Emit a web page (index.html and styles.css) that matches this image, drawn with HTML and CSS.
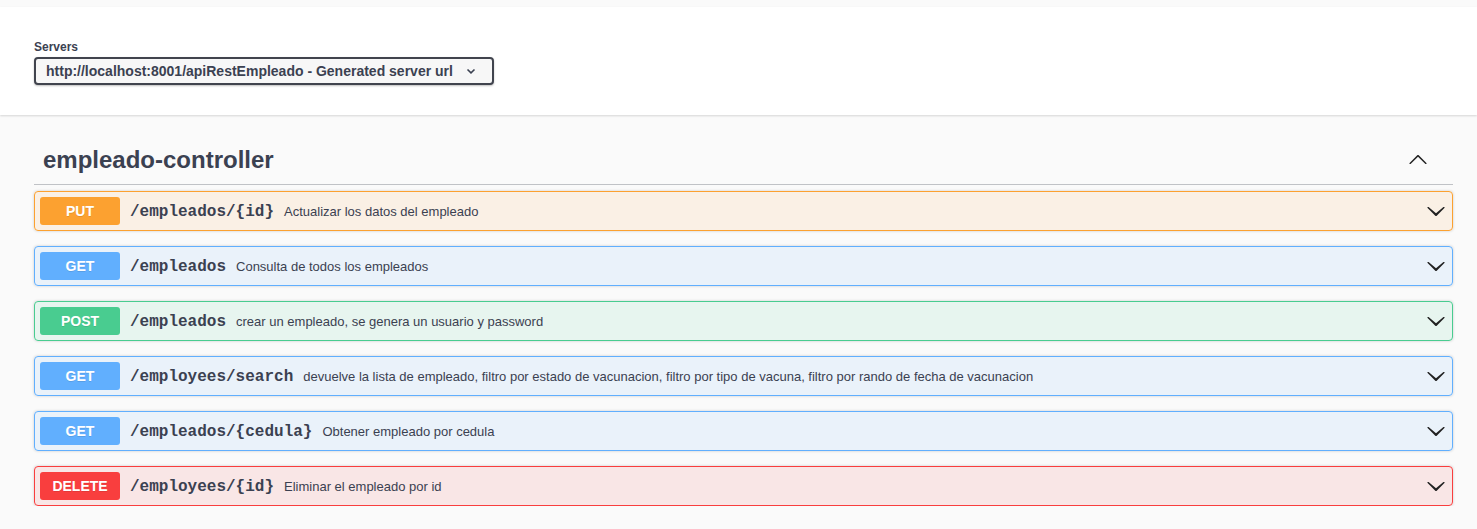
FILE: index.html
```html
<!DOCTYPE html>
<html lang="es">
<head>
<meta charset="utf-8">
<title>Swagger UI</title>
<link rel="stylesheet" href="styles.css">
</head>
<body>
<div class="top-strip"></div>
<section class="scheme-container">
  <div class="wrapper">
    <div class="servers">
      <span class="servers-title">Servers</span>
      <div class="select">
        <span>http://localhost:8001/apiRestEmpleado - Generated server url</span>
        <svg class="select-arrow" width="10" height="10" viewBox="0 0 10 10"><path d="M1.5 3.5 L5 6.8 L8.5 3.5" fill="none" stroke="#3b4151" stroke-width="1.6"/></svg>
      </div>
    </div>
  </div>
</section>
<div class="wrapper">
  <div class="tag-section">
    <h3 class="opblock-tag">
      <span>empleado-controller</span>
      <svg class="tag-arrow" width="20" height="20" viewBox="0 0 20 20"><path d="M17.418 14.891c.272.268.709.268.979 0s.271-.701 0-.969l-7.908-7.83c-.27-.268-.707-.268-.979 0l-7.908 7.83c-.27.268-.27.701 0 .969.271.268.709.268.979 0L10 7.75l7.418 7.141z" fill="#222"/></svg>
    </h3>
    <div class="ops">
      <div class="opblock put">
        <span class="method">PUT</span>
        <span class="path">/empleados/{id}</span>
        <span class="desc">Actualizar los datos del empleado</span>
        <svg class="arrow" width="20" height="20" viewBox="0 0 20 20"><path d="M17.418 6.109c.272-.268.709-.268.979 0s.271.701 0 .969l-7.908 7.83c-.27.268-.707.268-.979 0l-7.908-7.830c-.27-.268-.27-.701 0-.969.271-.268.709-.268.979 0L10 12.25l7.418-6.141z" fill="#222"/></svg>
      </div>
      <div class="opblock get">
        <span class="method">GET</span>
        <span class="path">/empleados</span>
        <span class="desc">Consulta de todos los empleados</span>
        <svg class="arrow" width="20" height="20" viewBox="0 0 20 20"><path d="M17.418 6.109c.272-.268.709-.268.979 0s.271.701 0 .969l-7.908 7.83c-.27.268-.707.268-.979 0l-7.908-7.83c-.27-.268-.27-.701 0-.969.271-.268.709-.268.979 0L10 12.25l7.418-6.141z" fill="#222"/></svg>
      </div>
      <div class="opblock post">
        <span class="method">POST</span>
        <span class="path">/empleados</span>
        <span class="desc">crear un empleado, se genera un usuario y password</span>
        <svg class="arrow" width="20" height="20" viewBox="0 0 20 20"><path d="M17.418 6.109c.272-.268.709-.268.979 0s.271.701 0 .969l-7.908 7.83c-.27.268-.707.268-.979 0l-7.908-7.83c-.27-.268-.27-.701 0-.969.271-.268.709-.268.979 0L10 12.25l7.418-6.141z" fill="#222"/></svg>
      </div>
      <div class="opblock get">
        <span class="method">GET</span>
        <span class="path">/employees/search</span>
        <span class="desc">devuelve la lista de empleado, filtro por estado de vacunacion, filtro por tipo de vacuna, filtro por rando de fecha de vacunacion</span>
        <svg class="arrow" width="20" height="20" viewBox="0 0 20 20"><path d="M17.418 6.109c.272-.268.709-.268.979 0s.271.701 0 .969l-7.908 7.83c-.27.268-.707.268-.979 0l-7.908-7.83c-.27-.268-.27-.701 0-.969.271-.268.709-.268.979 0L10 12.25l7.418-6.141z" fill="#222"/></svg>
      </div>
      <div class="opblock get">
        <span class="method">GET</span>
        <span class="path">/empleados/{cedula}</span>
        <span class="desc">Obtener empleado por cedula</span>
        <svg class="arrow" width="20" height="20" viewBox="0 0 20 20"><path d="M17.418 6.109c.272-.268.709-.268.979 0s.271.701 0 .969l-7.908 7.83c-.27.268-.707.268-.979 0l-7.908-7.83c-.27-.268-.27-.701 0-.969.271-.268.709-.268.979 0L10 12.25l7.418-6.141z" fill="#222"/></svg>
      </div>
      <div class="opblock delete">
        <span class="method">DELETE</span>
        <span class="path">/employees/{id}</span>
        <span class="desc">Eliminar el empleado por id</span>
        <svg class="arrow" width="20" height="20" viewBox="0 0 20 20"><path d="M17.418 6.109c.272-.268.709-.268.979 0s.271.701 0 .969l-7.908 7.83c-.27.268-.707.268-.979 0l-7.908-7.83c-.27-.268-.27-.701 0-.969.271-.268.709-.268.979 0L10 12.25l7.418-6.141z" fill="#222"/></svg>
      </div>
    </div>
  </div>
</div>
</body>
</html>
```
FILE: styles.css
```css
* { box-sizing: border-box; }
html, body { margin: 0; padding: 0; }
body {
  background: #fafafa;
  font-family: "Liberation Sans", Arial, sans-serif;
  color: #3b4151;
}
.top-strip { height: 7px; background: #fafafa; }
.wrapper {
  padding: 0 24px 0 34px;
}
.scheme-container {
  background: #fff;
  box-shadow: 0 1px 2px 0 rgba(0,0,0,.15);
  padding: 30px 0;
}
.servers { display: flex; flex-direction: column; align-items: flex-start; }
.servers-title {
  font-size: 12px;
  font-weight: bold;
  line-height: 17px;
  margin-top: 2px;
  margin-bottom: 1px;
  color: #3b4151;
}
.select {
  width: 460px;
  height: 28px;
  border: 2px solid #41444e;
  border-radius: 4px;
  background: #f7f7f7;
  box-shadow: 0 1px 2px 0 rgba(0,0,0,.25);
  display: flex;
  align-items: center;
  justify-content: space-between;
  padding: 0 16px 0 10px;
  font-size: 14px;
  font-weight: bold;
  color: #3b4151;
}
.select-arrow { display: block; }
.tag-section { margin-top: 20px; }
.opblock-tag {
  margin: 0 0 6px 0;
  padding: 10px 25px 10px 9px;
  height: 50px;
  display: flex;
  align-items: center;
  justify-content: space-between;
  font-size: 24px;
  font-weight: bold;
  line-height: 28px;
  color: #3b4151;
  border-bottom: 1px solid rgba(59,65,81,.3);
}
.tag-arrow { display: block; margin-top: -2px; }
.ops { display: flex; flex-direction: column; gap: 15px; }
.opblock {
  height: 40px;
  border: 1px solid;
  border-radius: 4px;
  box-shadow: 0 0 3px rgba(0,0,0,.19);
  display: flex;
  align-items: center;
  padding: 5px 6px 5px 5px;
}
.method {
  width: 80px;
  height: 28px;
  border-radius: 3px;
  color: #fff;
  font-size: 14px;
  font-weight: bold;
  display: flex;
  align-items: center;
  justify-content: center;
  flex: none;
  text-shadow: 0 1px 0 rgba(0,0,0,.1);
}
.path {
  font-family: "Liberation Mono", "Courier New", monospace;
  font-weight: bold;
  font-size: 16px;
  color: #3b4151;
  padding: 2px 10px 0;
  flex: none;
}
.desc {
  font-size: 13px;
  color: #3b4151;
  flex: 1;
}
.arrow { display: block; flex: none; }
.put { background: rgba(252,161,48,.1); border-color: #fca130; }
.put .method { background: #fca130; }
.get { background: rgba(97,175,254,.1); border-color: #61affe; }
.get .method { background: #61affe; }
.post { background: rgba(73,204,144,.1); border-color: #49cc90; }
.post .method { background: #49cc90; }
.delete { background: rgba(249,62,62,.1); border-color: #f93e3e; }
.delete .method { background: #f93e3e; }
```
